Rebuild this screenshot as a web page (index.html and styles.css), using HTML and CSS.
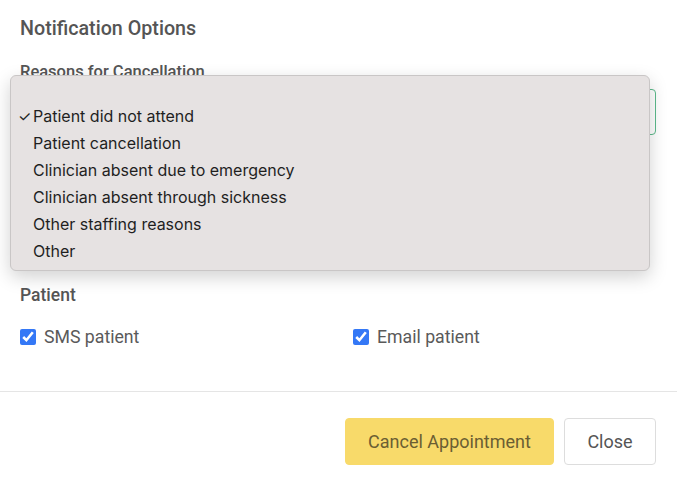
FILE: index.html
```html
<!DOCTYPE html>
<html lang="en">
<head>
    <meta charset="UTF-8">
    <meta name="viewport" content="width=device-width, initial-scale=1.0">
    <title>Cancel Appointment</title>
    <link rel="stylesheet" href="styles.css">
</head>
<body>
    <div class="modal">
        <div class="modal-body">
            <h2 class="section-title">Notification Options</h2>

            <div class="field">
                <div class="field-label">Reasons for Cancellation</div>
                <div class="select-box"></div>
            </div>

            <div class="field-spacer"></div>

            <div class="field">
                <div class="field-label field-label-lg">Patient</div>
                <div class="check-row">
                    <label class="check"><input type="checkbox" checked> SMS patient</label>
                    <label class="check"><input type="checkbox" checked> Email patient</label>
                </div>
            </div>

            <!-- open native dropdown over the select -->
            <ul class="dropdown">
                <li class="selected">Patient did not attend</li>
                <li>Patient cancellation</li>
                <li>Clinician absent due to emergency</li>
                <li>Clinician absent through sickness</li>
                <li>Other staffing reasons</li>
                <li>Other</li>
            </ul>
        </div>
        <div class="modal-footer">
            <button class="btn btn-warning">Cancel Appointment</button>
            <button class="btn btn-default">Close</button>
        </div>
    </div>
</body>
</html>
```

FILE: styles.css
```css
body {
    margin: 0;
    padding: 0;
    background-color: #ffffff;
    color: #555555;
    font-family: Roboto, "Liberation Sans", sans-serif;
}
.modal {
    width: 677px;
}
.modal-body {
    position: relative;
    padding: 18px 21px 0 20px;
}
.section-title {
    margin: 0;
    font-size: 19.7px;
    font-weight: 500;
    line-height: 22px;
    color: #555555;
}
.field {
    margin-top: 22px;
}
.field-label {
    font-size: 16.5px;
    font-weight: 500;
    line-height: 20px;
    color: #555555;
}
.field-label-lg {
    font-size: 17.5px;
}
.select-box {
    margin-top: 7px;
    height: 44px;
    border: 1px solid #5dba8c;
    border-radius: 4px;
}
.field-spacer {
    height: 128px;
}
.check-row {
    display: flex;
    margin-top: 20px;
}
.check {
    display: flex;
    align-items: center;
    gap: 8px;
    flex: none;
    width: 333px;
    font-size: 17.7px;
    line-height: 24px;
    color: #5a5a5a;
}
.check input {
    width: 16px;
    height: 16px;
    margin: 0;
    accent-color: #3478f6;
}
.dropdown {
    position: absolute;
    left: 10px;
    top: 75px;
    width: 638px;
    margin: 0;
    padding: 27px 0 5px 0;
    list-style: none;
    background-color: #e6e2e2;
    border: 1px solid #c9c6c6;
    border-radius: 6px;
    box-shadow: 0 6px 18px rgba(0, 0, 0, 0.18);
    font-family: Inter, "Liberation Sans", sans-serif;
    font-size: 16px;
    color: #1f1f1f;
}
.dropdown li {
    position: relative;
    height: 27px;
    line-height: 27px;
    padding-left: 22px;
}
.dropdown li.selected::before {
    content: "\2713";
    position: absolute;
    left: 7px;
    font-size: 15px;
}
.modal-footer {
    display: flex;
    justify-content: flex-end;
    gap: 10px;
    margin-top: 42px;
    padding: 26px 21px 20px 20px;
    border-top: 1px solid #e5e5e5;
}
.btn {
    height: 47px;
    padding: 0 22px;
    border-radius: 4px;
    font-family: Roboto, "Liberation Sans", sans-serif;
    font-size: 18px;
    cursor: pointer;
}
.btn-warning {
    background-color: #f8da6a;
    border: 1px solid #f8da6a;
    color: #6b5e33;
    width: 209px;
    padding: 0;
}
.btn-default {
    background-color: #ffffff;
    border: 1px solid #dddddd;
    color: #555555;
    width: 92px;
}
```
